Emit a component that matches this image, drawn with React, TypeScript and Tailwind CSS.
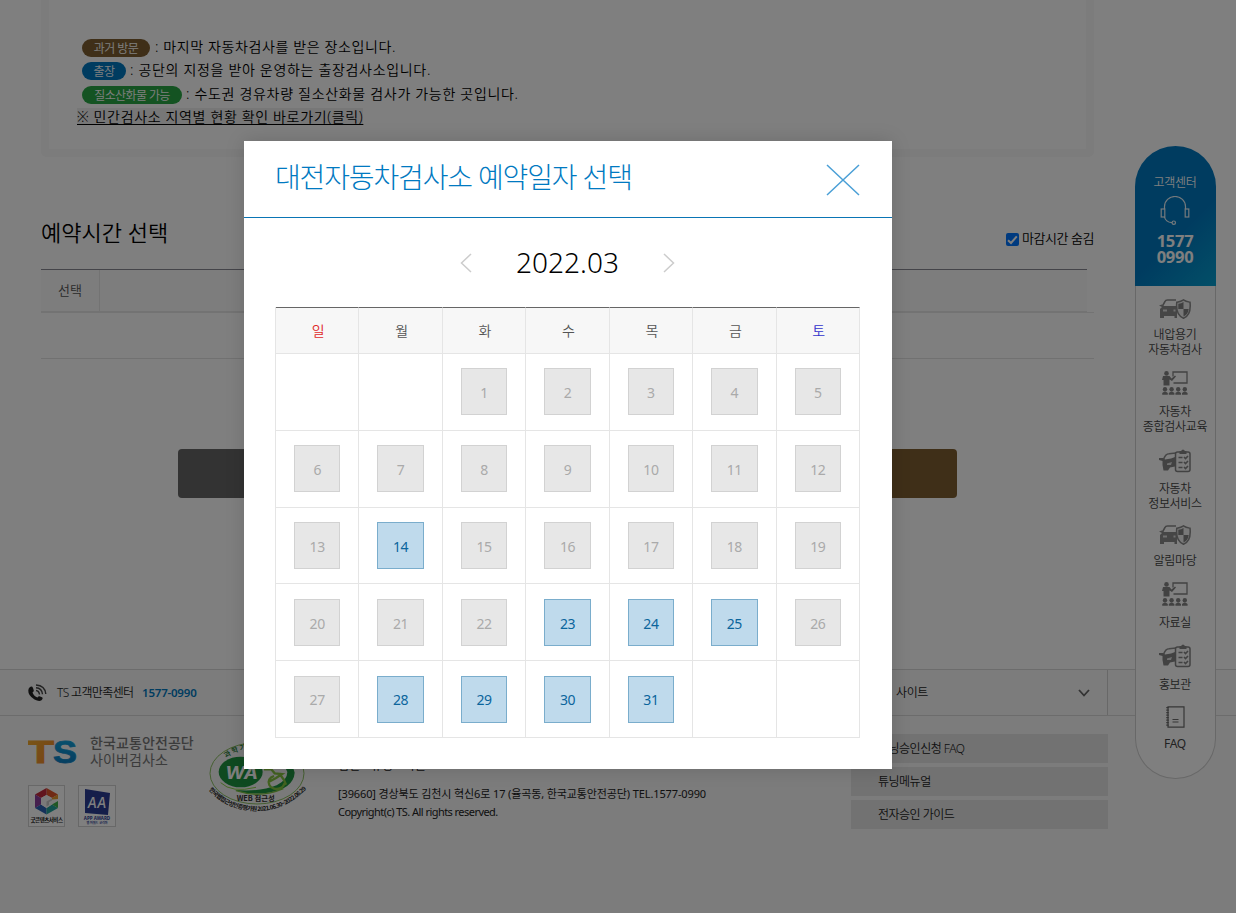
import React from 'react'

const WEEKDAYS = ['일', '월', '화', '수', '목', '금', '토']
const OPEN_DAYS = [14, 23, 24, 25, 28, 29, 30, 31]
const FIRST_DAY = 2
const LAST_DATE = 31

const CarShieldIcon = () => (
  <svg width="32" height="20" viewBox="0 0 32 20" fill="none">
    <path d="M3.500 7 6 2.500Q6.500 1 8.500 1H17" stroke="#8a8a8a" strokeWidth="1.600" />
    <path d="M0 6.500 3 5.500 4.500 7H18v12h-2.500v-2H5v2H1V10l2-2z" fill="#8c8c8c" />
    <path d="M4 10.500h4v2H4zM14.500 10.500h2v2h-2z" fill="#e0e0e0" />
    <path d="M24.500 .8C27 2.500 29 2.800 31 3.200 32 12 30 17 24.500 19.300 19 17 16.800 12 17.800 3.200 20 2.800 22 2.500 24.500 .8z" fill="#f0f0f0" stroke="#8a8a8a" strokeWidth="1.500" />
    <path d="M24.500 3v7H19.300V4.800Q22.500 4.500 24.500 3zM24.500 10h5.200Q29 15.500 24.500 17.500z" fill="#808080" />
  </svg>
)

const TeachIcon = () => (
  <svg width="26" height="24" viewBox="0 0 26 24" fill="#858585">
    <path d="M11 5.500V1h14v11H11.500" fill="none" stroke="#858585" strokeWidth="1.300" />
    <circle cx="4.500" cy="2.400" r="2.300" />
    <path d="M1 5h6.500l2 2.500L13 4.500l1 1L10 10 7.500 8.500V14.500h-6V9H0z" />
    {[3, 9.600, 16.200, 22.800].map((x) => (
      <g key={x}>
        <circle cx={x} cy="18.300" r="2.200" />
        <path d={`M${x - 2.800} 23.800v-1.800q2.800-3 5.600 0v1.800z`} />
      </g>
    ))}
  </svg>
)

const CarCheckIcon = () => (
  <svg width="32" height="24" viewBox="0 0 32 24" fill="none">
    <path d="M4.500 10.500Q6.500 4.800 10 4.800L17 4" stroke="#8c8c8c" strokeWidth="1.600" />
    <path d="M0 9h4l2 1.500L12 9.500l4-1.500v9.500l-5 1-2 3H4.500L3.500 16V12L0 11z" fill="#858585" />
    <path d="M8 14.500l5-1.500-1 3H8z" fill="#dedede" />
    <rect x="16.500" y="3" width="14.500" height="19.500" rx="2" fill="#f8f8f8" stroke="#858585" strokeWidth="1.500" />
    <path d="M20.500 2h1.500q2-3 4 0h1.500v3h-7z" fill="#858585" />
    <path d="M19.500 8.500h4M19.500 13.500h4M19.500 18.500h4" stroke="#858585" strokeWidth="1.300" />
    <path d="m25 8 1.500 1.500L29 7m-4 6 1.500 1.500L29 12m-4 6 1.500 1.500L29 17" stroke="#858585" strokeWidth="1.600" />
  </svg>
)

const NoteIcon = () => (
  <svg width="19" height="22" viewBox="0 0 19 22" fill="none" stroke="#6c6c6c">
    <path d="M2 .8h16v20.400H2z" strokeWidth="1.200" />
    <path d="M1.500 1v20" strokeWidth="2.500" strokeDasharray="1.200 1.300" />
    <path d="M6.500 13.500h6M6.500 16h6" strokeWidth="1.200" />
  </svg>
)

const HeadsetIcon = () => (
  <svg width="30" height="29" viewBox="0 0 30 29" fill="none" stroke="#e8f2f8" strokeWidth="1.200">
    <path d="M4.500 13v-2.500a10.500 10 0 0 1 21 0V13" />
    <rect x="1.200" y="13" width="3.600" height="8" />
    <rect x="25.200" y="13" width="3.600" height="8" />
    <path d="M4.500 21q1 5 7.500 5.700" />
    <circle cx="13.800" cy="26.700" r="1.700" />
  </svg>
)

const QUICK_MENU = [
  { Icon: CarShieldIcon, lines: ['내압용기', '자동차검사'], box: 'h-[74px] gap-[5px]' },
  { Icon: TeachIcon, lines: ['자동차', '종합검사교육'], box: 'h-[78px] gap-2' },
  { Icon: CarCheckIcon, lines: ['자동차', '정보서비스'], box: 'h-[74px] gap-[7px]' },
  { Icon: CarShieldIcon, lines: ['알림마당'], box: 'h-[59px] gap-[5px]' },
  { Icon: TeachIcon, lines: ['자료실'], box: 'h-[62px] gap-2' },
  { Icon: CarCheckIcon, lines: ['홍보관'], box: 'h-[61px] gap-2' },
  { Icon: NoteIcon, lines: ['FAQ'], box: 'h-[60px] gap-[6px] font-normal' },
]

const Badge = ({ className, children }: { className: string; children: React.ReactNode }) => (
  <span className={`flex h-[18px] items-center justify-center rounded-full pt-px text-[12px] tracking-[-0.6px] text-white ${className}`}>
    {children}
  </span>
)

const Notice = () => (
  <section className="h-[157px] rounded-b-md border-x-8 border-b-8 border-[#f8f8f8] pl-[33px] pt-9 text-[14px] leading-[23.500px] text-black">
    <div className="flex h-[23.500px] items-center gap-[5px]">
      <Badge className="w-[68px] bg-[#7f5f31]">과거 방문</Badge>
      <span className="pb-0.5 tracking-[0.620px]">: 마지막 자동차검사를 받은 장소입니다.</span>
    </div>
    <div className="flex h-[23.500px] items-center gap-[4px]">
      <Badge className="w-[44px] bg-[#0079c1]">출장</Badge>
      <span className="pb-[3px] tracking-[0.680px]">: 공단의 지정을 받아 운영하는 출장검사소입니다.</span>
    </div>
    <div className="flex h-[23.500px] items-center gap-[4px]">
      <Badge className="w-[100px] bg-[#28a745]">질소산화물 가능</Badge>
      <span className="pb-0.5 tracking-[0.690px]">: 수도권 경유차량 질소산화물 검사가 가능한 곳입니다.</span>
    </div>
    <a className="-ml-[5px] mt-[1.500px] block h-[17px] w-[286px] whitespace-nowrap bg-[#eee] leading-[17px] tracking-[0.650px] underline underline-offset-2">
      ※ 민간검사소 지역별 현황 확인 바로가기(클릭)
    </a>
  </section>
)

const TimeSelect = () => (
  <section className="h-[512px] pt-[60px]">
    <div className="flex h-[52px] items-start justify-between">
      <h2 className="text-[22px] leading-[30px] text-black">예약시간 선택</h2>
      <label className="flex items-center gap-[3px] pt-[14px] text-[13px] leading-[15px] tracking-[-0.450px] text-black">
        <span className="flex h-[13px] w-[13px] items-center justify-center rounded-[2px] bg-[#0075ff]">
          <svg width="11" height="10" viewBox="0 0 11 10" fill="none" stroke="#fff" strokeWidth="2">
            <path d="M1 5.200 4 8 9.800 1.300" />
          </svg>
        </span>
        <span className="pb-0.5">마감시간 숨김</span>
      </label>
    </div>
    <div className="border-b border-[#e6e6e6]">
      <div className="mr-[7px] flex h-[43px] border-b border-t border-b-[#e6e6e6] border-t-[#888892] bg-[#fafafa]">
        <div className="flex w-[59px] items-center justify-center border-r border-[#e6e6e6] text-[13px] text-[#555]">선택</div>
      </div>
    </div>
    <div className="h-[46px] border-b border-[#e2e2e2]" />
    <div className="flex justify-between pl-[137px] pr-[137px] pt-[90px]">
      <div className="h-[49px] w-[380px] rounded bg-[#666]" />
      <div className="h-[49px] w-[380px] rounded bg-[#7f5f31]" />
    </div>
  </section>
)

const TsLogo = () => (
  <svg width="50" height="24" viewBox="0 0 50 24">
    <defs>
      <linearGradient id="tsOrange" x1="0" y1="0" x2="1" y2="1">
        <stop offset="0" stopColor="#f2b02c" />
        <stop offset="1" stopColor="#ef7f2d" />
      </linearGradient>
      <linearGradient id="tsBlue" x1="0" y1="0" x2="0" y2="1">
        <stop offset="0" stopColor="#13a8e0" />
        <stop offset="1" stopColor="#0a73ba" />
      </linearGradient>
    </defs>
    <g fontFamily="Liberation Sans, sans-serif" fontWeight="bold" fontSize="31" strokeWidth="0.800">
      <text x="-1" y="23" textLength="27" lengthAdjust="spacingAndGlyphs" fill="url(#tsOrange)" stroke="url(#tsOrange)">T</text>
      <text x="25" y="23" textLength="24" lengthAdjust="spacingAndGlyphs" fill="url(#tsBlue)" stroke="url(#tsBlue)">S</text>
    </g>
  </svg>
)

const GoodContentMark = () => (
  <div className="flex h-[42px] w-[37px] flex-col items-center border border-[#d0d0d0] bg-white pt-[2px]">
    <svg width="25" height="27" viewBox="0 0 25 27">
      <path d="M12.500 0 24 6.500 18 10 12.500 7z" fill="#e0552b" />
      <path d="M12.500 0 1 6.500 7 10 12.500 7z" fill="#c22a3c" />
      <path d="M1 6.500v13.500L7 16.500V10z" fill="#8a3f9c" />
      <path d="M1 20 12.500 26.500V20L7 16.500z" fill="#2b62b5" />
      <path d="M12.500 26.500 24 20l-6-3.500-5.500 3.500z" fill="#22a19a" />
      <path d="M24 20V12.500l-6 1v3z" fill="#3fae48" />
      <path d="M24 6.500v4.500l-6 1V10z" fill="#e89a2c" />
      <path d="m7 10 5.500-3L18 10v1.500h6v1.500l-6 3.500-5.500 3.500L7 16.500z" fill="#f4f4f4" />
      <path d="m12.500 13.500 5.500-3v2l-3 1.500v3l-2.500 1.500z" fill="#c8c8c8" />
    </svg>
    <span className="whitespace-nowrap text-[5.500px] font-bold leading-[10px] tracking-[-0.500px] text-[#222]">굿콘텐츠서비스</span>
  </div>
)

const AppAwardMark = () => (
  <div className="flex h-[42px] w-[38px] flex-col items-center border border-[#d0d0d0] bg-white pt-[3px]">
    <svg width="27" height="26" viewBox="0 0 27 26">
      <path d="M1 0 26 4 24 26 1 24z" fill="#2b3d95" />
      <text x="3.500" y="19" textLength="19" lengthAdjust="spacingAndGlyphs" fontFamily="Inter, sans-serif" fontSize="15" fontWeight="500" fontStyle="italic" fill="#fff">AA</text>
    </svg>
    <span className="whitespace-nowrap text-[4.500px] font-bold leading-[6px] text-[#2b3d95]">APP AWARD</span>
    <span className="whitespace-nowrap text-[3px] font-bold leading-[4px] text-[#2b3d95]">앱 어워드 코리아</span>
  </div>
)

const WebAccessMark = () => (
  <svg width="130" height="90" viewBox="0 0 390 270" fontFamily="Noto Sans CJK KR, sans-serif">
    <defs>
      <path id="markTop" d="M78 84Q115 55 190 50" />
      <path id="markBottom" d="M26 180Q80 240 167 243T322 174" />
    </defs>
    <ellipse cx="171" cy="130" rx="141" ry="92" fill="#f4f4f4" stroke="#8cc063" strokeWidth="3" />
    <ellipse cx="122" cy="126" rx="66" ry="46" fill="#1f9440" />
    <path d="M190 84Q280 90 284 128 280 176 205 188 140 196 105 180 180 186 230 166 262 150 262 126 255 98 190 84z" fill="#1f9440" />
    <path d="M62 158Q95 190 168 172" stroke="#8fd04a" strokeWidth="3" fill="none" />
    <path d="M108 182Q180 206 250 176" stroke="#7cc142" strokeWidth="4" fill="none" />
    <path d="M192 118h22l10 12 22 2-18 12-22 12M222 138a24 20 0 1 0 28 8M238 130l14 20 6 14" stroke="#86c540" strokeWidth="7" fill="none" />
    <text x="76" y="147" fontFamily="Inter, sans-serif" fontSize="50" fontWeight="bold" fontStyle="italic" textLength="98" lengthAdjust="spacingAndGlyphs" fill="#fff">WA</text>
    <text x="110" y="213" fontSize="22" fontWeight="bold" textLength="114" lengthAdjust="spacingAndGlyphs" fill="#333">WEB 접근성</text>
    <text fontSize="21" fontWeight="bold" fill="#1f7a35">
      <textPath href="#markTop">과 학 기 술</textPath>
    </text>
    <text fontSize="18" fontWeight="bold" fill="#222" letterSpacing="-1.900">
      <textPath href="#markBottom">한국웹접근성인증평가원 2021.06.30~2022.06.29</textPath>
    </text>
  </svg>
)

const PhoneIcon = () => (
  <svg width="19" height="18" viewBox="0 0 19 18" fill="none">
    <path d="M1.500 3.500Q4 1.500 5 4l.8 2.500Q6 7.500 4.500 8.500q1.500 4 5 5 1-1.500 2-1.200l2.500 1q1.500 1-.5 3Q11 18 6.500 15.500 0 11.500.3 6.500.4 4.500 1.500 3.500z" fill="#222" />
    <path d="M8 6.500q3 .3 3.500 4M8 3.800q6 .4 6.500 6.500M8 1q9 .5 9.800 9" stroke="#444" strokeWidth="1.400" />
  </svg>
)

const Footer = () => (
  <footer className="h-[244px] bg-[#f8f8f8] text-[11px] text-[#222]">
    <div className="flex h-[47px] items-center border-y border-[#d8d8d8] pl-7">
      <PhoneIcon />
      <span className="ml-[10px] w-[85px] whitespace-nowrap text-[12px] tracking-[-0.650px]">TS 고객만족센터</span>
      <b className="text-[11.500px] font-semibold tracking-[-0.200px] text-[#0079c1]">1577-0990</b>
      <div className="ml-auto mr-32 flex h-full w-[257px] items-center justify-between border-r border-[#d0d0d0] pl-[18px] pr-[17px]">
        <span className="text-[12px] tracking-[-0.4px] [word-spacing:3px]">관련 사이트</span>
        <svg width="12" height="8" viewBox="0 0 12 8" fill="none" stroke="#666" strokeWidth="1.800">
          <path d="m1 1 5 5.500L11 1" />
        </svg>
      </div>
    </div>
    <div className="flex pl-7">
      <div className="w-[172px] pt-[19px]">
        <div className="flex items-center gap-3">
          <TsLogo />
          <div className="whitespace-nowrap text-[14px] leading-[16.500px] text-[#777]">
            <p className="font-medium tracking-[0.1px]">한국교통안전공단</p>
            <p className="font-normal tracking-[0.1px]">사이버검사소</p>
          </div>
        </div>
        <div className="mt-[17px] flex gap-[13px]">
          <GoodContentMark />
          <AppAwardMark />
        </div>
      </div>
      <div className="w-[130px] pt-[14px]">
        <WebAccessMark />
      </div>
      <div className="ml-2 w-[513px] whitespace-nowrap pt-[41px] leading-[18px]">
        <p className="mb-[10px] text-[12px] tracking-[0.300px]">검단 · 튜닝 · 지원</p>
        <p className="font-normal tracking-[-0.120px]">[39660] 경상북도 김천시 혁신6로 17 (율곡동, 한국교통안전공단) TEL.1577-0990</p>
        <p className="font-normal tracking-[-0.550px]">Copyright(c) TS. All rights reserved.</p>
      </div>
      <ul className="flex w-[257px] flex-col gap-1 pt-[18px] text-[12px] tracking-[-0.5px]">
        {['튜닝승인신청 FAQ', '튜닝메뉴얼', '전자승인 가이드'].map((label) => (
          <li key={label} className="flex h-[29px] items-center bg-[#e4e4e4] pl-[27px] pt-px">{label}</li>
        ))}
      </ul>
    </div>
  </footer>
)

const QuickMenu = () => (
  <aside className="absolute left-[1135px] top-[146px] w-[81px] text-center text-[12px] leading-[15px] tracking-[-0.3px] text-[#444]">
    <div className="flex h-[140px] flex-col items-center rounded-t-[41px] bg-[linear-gradient(135deg,#0079c1_60%,#069fd0)] pr-px pt-[29px] text-white">
      <span>고객센터</span>
      <div className="mt-[6px]"><HeadsetIcon /></div>
      <b className="mt-2 text-[16.500px] font-bold leading-4">1577<br />0990</b>
    </div>
    <div className="h-[493px] rounded-b-[41px] border-x border-b border-[#d0d0d0] bg-white pr-px pt-[10px]">
      {QUICK_MENU.map(({ Icon, lines, box }) => (
        <div key={lines.join()} className={`flex flex-col items-center ${box}`}>
          <div className="flex h-[26px] items-center"><Icon /></div>
          <div>{lines.map((line) => <p key={line}>{line}</p>)}</div>
        </div>
      ))}
    </div>
  </aside>
)

const DayCell = ({ date }: { date: number }) => {
  const inMonth = date >= 1 && date <= LAST_DATE
  const open = OPEN_DAYS.includes(date)
  return (
    <div className="border-b border-r border-[#e5e5e5] px-[18px] pt-[14.400px]">
      {inMonth && (
        <div className={`flex h-[47px] items-center justify-center border pt-[1.500px] text-[14px] font-normal tracking-[-0.4px] ${open ? 'border-[#7aadcc] bg-[#bfdaec] text-[#0b659c]' : 'border-[#d2d2d2] bg-[#e7e7e7] text-[#aaa]'}`}>
          {date}
        </div>
      )}
    </div>
  )
}

const CalendarDialog = () => (
  <div className="absolute left-[244px] top-[141px] h-[628px] w-[648px] bg-white shadow-[0_0_18px_rgba(0,0,0,0.15)]">
    <div className="flex h-[77px] items-start justify-between border-b border-[#0a75b5] pl-[31px] pr-8 pt-[17px]">
      <h1 className="text-[28px] font-light leading-[38px] tracking-[-1.150px] text-[#0079c1]">대전자동차검사소 예약일자 선택</h1>
      <svg className="mt-[6px]" width="34" height="32" viewBox="0 0 34 32" stroke="#4a9fd6" strokeWidth="1.500">
        <path d="M1 1 33 31M33 1 1 31" />
      </svg>
    </div>
    <div className="flex h-[89px] items-center justify-center gap-11 pr-px">
      <svg width="12" height="20" viewBox="0 0 12 20" fill="none" stroke="#ccc" strokeWidth="1.500"><path d="M11 1 1.500 10 11 19" /></svg>
      <span className="pb-0.5 text-[28px] font-light text-black">2022.03</span>
      <svg width="12" height="20" viewBox="0 0 12 20" fill="none" stroke="#ccc" strokeWidth="1.500"><path d="M1 1 10.500 10 1 19" /></svg>
    </div>
    <div className="ml-[31px] w-[585px] border-l border-[#e5e5e5]">
      <div className="grid h-[47px] grid-cols-7">
        {WEEKDAYS.map((day) => (
          <div key={day} className="flex items-center justify-center border-b border-r border-t border-[#e5e5e5] border-t-[#666] bg-[#f7f7f7] pl-0.5 text-[14px] text-[#555] first:text-[#e02a2a] last:text-[#3333cc]">
            {day}
          </div>
        ))}
      </div>
      <div className="grid h-[384px] grid-cols-7 grid-rows-5">
        {Array.from({ length: 35 }, (_, i) => (
          <DayCell key={i} date={i - FIRST_DAY + 1} />
        ))}
      </div>
    </div>
  </div>
)

const App = () => {
  return (
    <div className="relative h-[913px] w-[1236px] overflow-hidden bg-white font-['Noto_Sans','Noto_Sans_CJK_KR',sans-serif] font-[350]">
      <main className="ml-[41px] w-[1053px]">
        <Notice />
        <TimeSelect />
      </main>
      <Footer />
      <QuickMenu />
      <div className="absolute inset-0 bg-black/50" />
      <CalendarDialog />
    </div>
  )
}

export default App
